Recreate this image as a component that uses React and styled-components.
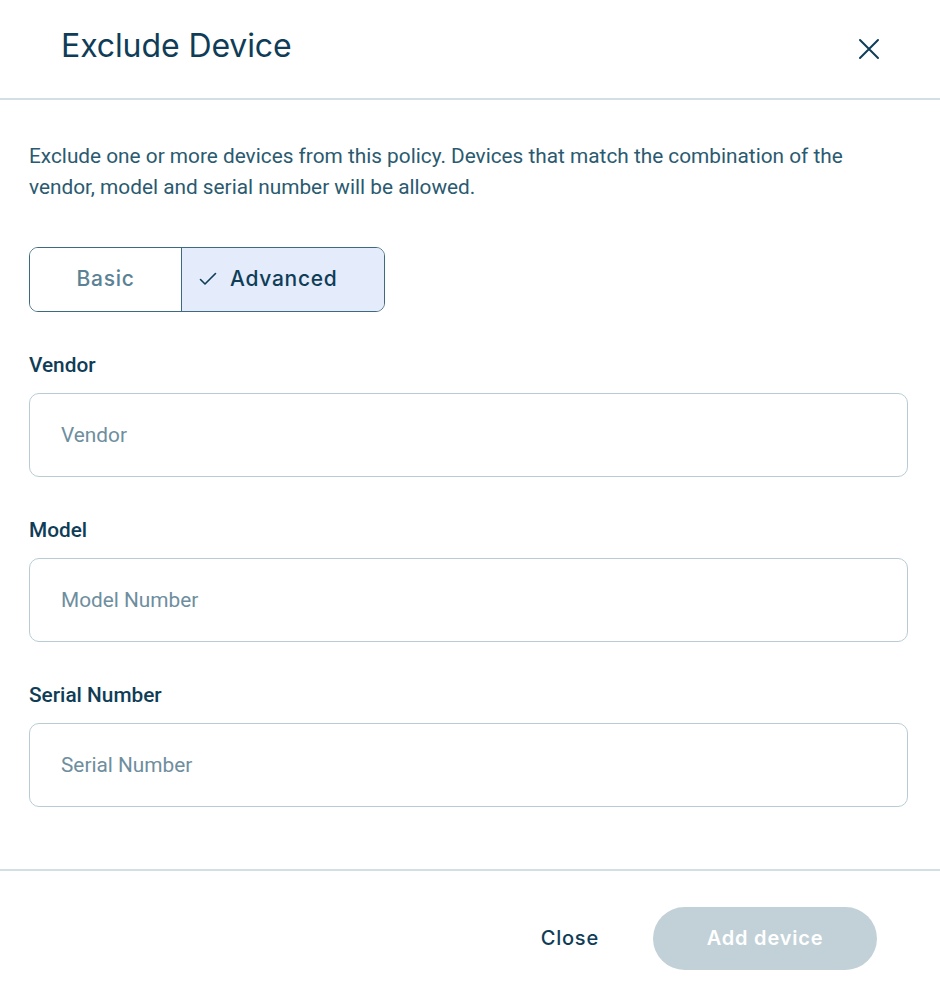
import React from 'react';
import styled, { createGlobalStyle } from 'styled-components';

const Colors = {
  navy: '#0f3d57',
  text: '#2a5a6f',
  placeholder: '#6e8e9e',
  border: '#b9ccd5',
  toggleBorder: '#3e6a7f',
  selected: '#e4ebfb',
  divider: '#d3dfe5',
  disabled: '#c2d1d8',
};

const GlobalStyle = createGlobalStyle`
  body {
    margin: 0;
    background: #fff;
    font-family: Roboto, "Liberation Sans", sans-serif;
  }
  * { box-sizing: border-box; }
`;

const Dialog = styled.div`
  width: 940px;
  height: 1002px;
  display: flex;
  flex-direction: column;
  background: #fff;
`;

const Header = styled.header`
  height: 100px;
  display: flex;
  align-items: center;
  justify-content: space-between;
  padding: 0 57px 0 61px;
  border-bottom: 2px solid ${Colors.divider};
`;

const Title = styled.h1`
  margin: 0 0 7px;
  font-family: Inter, sans-serif;
  font-weight: 400;
  font-size: 32px;
  letter-spacing: -0.1px;
  color: ${Colors.navy};
`;

const IconButton = styled.button`
  border: none;
  background: none;
  padding: 0;
  width: 28px;
  height: 28px;
  display: flex;
  align-items: center;
  justify-content: center;
  color: ${Colors.navy};
`;

const Body = styled.div`
  flex: 1;
  padding: 41px 32px 0 29px;
`;

const Description = styled.p`
  margin: 0;
  font-size: 20.8px;
  line-height: 31px;
  color: ${Colors.text};
`;

const Toggle = styled.div`
  display: flex;
  width: 356px;
  height: 65px;
  margin: 44px 0 41px;
  border: 1.5px solid ${Colors.toggleBorder};
  border-radius: 9px;
  overflow: hidden;
`;

const Segment = styled.button`
  width: ${(p) => p.$width}px;
  display: flex;
  align-items: center;
  justify-content: ${(p) => (p.$active ? 'flex-start' : 'center')};
  gap: 13px;
  border: none;
  border-left: ${(p) => (p.$first ? 'none' : `1.5px solid ${Colors.toggleBorder}`)};
  background: ${(p) => (p.$active ? Colors.selected : '#fff')};
  color: ${(p) => (p.$active ? Colors.navy : '#5b8294')};
  font-family: Inter, sans-serif;
  font-weight: 500;
  font-size: 21px;
  letter-spacing: 0.7px;
  padding: 0 0 2px ${(p) => (p.$active ? '17px' : '0')};
`;

const Field = styled.div`
  display: flex;
  flex-direction: column;
  gap: 16px;
  margin-bottom: 41px;
`;

const Label = styled.label`
  font-size: 20.8px;
  line-height: 24px;
  font-weight: 500;
  color: ${Colors.navy};
`;

const Input = styled.input`
  width: 879px;
  height: 84px;
  border: 1.5px solid ${Colors.border};
  border-radius: 10px;
  padding: 0 31px;
  font-family: Roboto, sans-serif;
  font-size: 20.8px;
  color: ${Colors.navy};
  &::placeholder {
    color: ${Colors.placeholder};
  }
`;

const Footer = styled.footer`
  height: 133px;
  display: flex;
  align-items: center;
  justify-content: flex-end;
  gap: 30px;
  padding: 3px 63px 0 0;
  border-top: 2px solid ${Colors.divider};
`;

const TextButton = styled.button`
  border: none;
  background: none;
  padding: 0 24px;
  font-family: Inter, sans-serif;
  font-weight: 500;
  font-size: 20px;
  letter-spacing: 0.8px;
  color: ${Colors.navy};
`;

const PrimaryButton = styled.button`
  width: 224px;
  height: 63px;
  border: none;
  border-radius: 32px;
  background: ${Colors.disabled};
  color: #fff;
  font-family: Inter, sans-serif;
  font-weight: 600;
  font-size: 20px;
  letter-spacing: 0.8px;
`;

const fields = [
  { label: 'Vendor', placeholder: 'Vendor' },
  { label: 'Model', placeholder: 'Model Number' },
  { label: 'Serial Number', placeholder: 'Serial Number' },
];

export default function App() {
  return (
    <>
      <GlobalStyle />
      <Dialog>
        <Header>
          <Title>Exclude Device</Title>
          <IconButton aria-label="Close">
            <svg width="22" height="22" viewBox="0 0 22 22" fill="none" stroke="currentColor" strokeWidth="2" strokeLinecap="round">
              <path d="M2 2L20 20M20 2L2 20" />
            </svg>
          </IconButton>
        </Header>
        <Body>
          <Description>
            Exclude one or more devices from this policy. Devices that match the combination of the
            vendor, model and serial number will be allowed.
          </Description>
          <Toggle>
            <Segment $first $width={152}>Basic</Segment>
            <Segment $active $width={204}>
              <svg width="18" height="14" viewBox="0 0 18 14" fill="none" stroke="currentColor" strokeWidth="1.6" strokeLinecap="round" strokeLinejoin="round">
                <path d="M1.5 7.5L6 12L16.5 1.5" />
              </svg>
              Advanced
            </Segment>
          </Toggle>
          {fields.map((f) => (
            <Field key={f.label}>
              <Label>{f.label}</Label>
              <Input placeholder={f.placeholder} />
            </Field>
          ))}
        </Body>
        <Footer>
          <TextButton>Close</TextButton>
          <PrimaryButton disabled>Add device</PrimaryButton>
        </Footer>
      </Dialog>
    </>
  );
}
